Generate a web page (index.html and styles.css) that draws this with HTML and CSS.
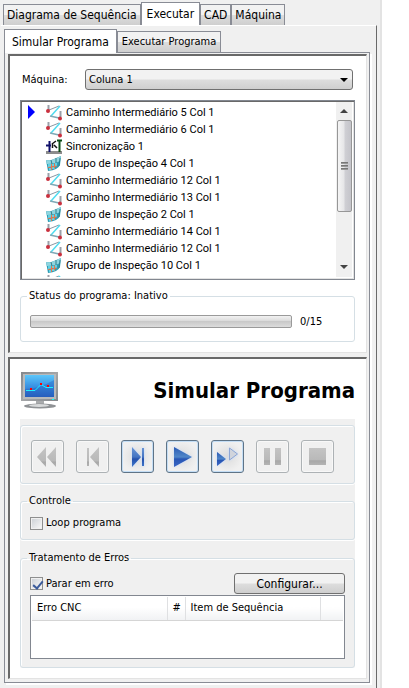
FILE: index.html
```html
<!DOCTYPE html>
<html lang="pt-BR">
<head>
<meta charset="utf-8">
<meta name="viewport" content="width=device-width, initial-scale=1">
<title>Simular Programa</title>
<link rel="stylesheet" href="styles.css">
</head>
<body>
<svg class="defs" width="0" height="0" aria-hidden="true">
  <defs>
    <linearGradient id="gBlue" x1="0" y1="0" x2="0" y2="1"><stop offset="0" stop-color="#6a96d6"/><stop offset=".5" stop-color="#4474c2"/><stop offset=".6" stop-color="#2450ac"/><stop offset="1" stop-color="#3f78cc"/></linearGradient>
    <linearGradient id="gPlay" x1="0" y1="0" x2="0" y2="1"><stop offset="0" stop-color="#2a5ab4"/><stop offset=".5" stop-color="#4f86c8"/><stop offset=".6" stop-color="#2856b4"/><stop offset="1" stop-color="#3a66c4"/></linearGradient>
    <linearGradient id="gGray" x1="0" y1="0" x2="0" y2="1"><stop offset="0" stop-color="#c4c4c4"/><stop offset=".7" stop-color="#b9b9b9"/><stop offset=".75" stop-color="#a8a8a8"/><stop offset="1" stop-color="#b4b4b4"/></linearGradient>
    <linearGradient id="gScreen" x1="0" y1="0" x2="0" y2="1"><stop offset="0" stop-color="#5cc6fa"/><stop offset=".5" stop-color="#3a94e4"/><stop offset="1" stop-color="#2a62c0"/></linearGradient>
    <linearGradient id="gFrame" x1="0" y1="0" x2="1" y2="1"><stop offset="0" stop-color="#84888c"/><stop offset=".5" stop-color="#a4a6a8"/><stop offset="1" stop-color="#84888c"/></linearGradient>
    <symbol id="path" viewBox="0 0 16 16">
      <path d="M2.500 0v5M14.500 6v6" stroke="#9aa0a9" stroke-width="2"/>
      <path d="M3 5l10-4" stroke="#8a97a3" stroke-width="1"/>
      <path d="M14 1L5 11" fill="none" stroke="#4fdcf0" stroke-width="1.500"/>
      <path d="M4 11l9 2" stroke="#7fa9b6" stroke-width="1.500"/>
      <circle cx="2" cy="6" r="2" fill="#c9303e"/><circle cx="14" cy="13.500" r="2" fill="#c9303e"/>
    </symbol>
    <symbol id="sync" viewBox="0 0 16 16">
      <path d="M0 12h16v3H0z" fill="#8c8c8c"/>
      <path d="M3.500 2v11M0 6.500h5" stroke="#10106a" stroke-width="2"/>
      <path d="M13.500 1v12M11 1.500h5" stroke="#0a4a14" stroke-width="2"/>
      <path d="M10 2L6 5M6.500 4v5M8 6l3 3" fill="none" stroke="#111" stroke-width="1.500"/>
    </symbol>
    <symbol id="group" viewBox="0 0 16 16">
      <path d="M0 4q4 1 8-1l7-3-1 9q-2 5-12 6z" fill="#2f9db4"/>
      <path d="M0 4q4 1 8-1l7-3-1 5Q9 8 1 8z" fill="#8fd5df"/>
      <path d="M5 4l1 4M10 2v5M14 2l-1 8" fill="none" stroke="#2f7f8e"/>
      <path d="M2 8h3v3H2zM6 8h2v2H6zM9 7h2v3H9zM3 12h2v2H3zM6 11h3v2H6z" fill="#5ed2e6"/>
      <path d="M2 11.500l9-1.500M5.500 8v6M8.500 7.500v5" fill="none" stroke="#e8764c"/>
    </symbol>
  </defs>
</svg>

<main class="app">
  <nav class="tabs tabs-main">
    <button class="tab" type="button">Diagrama de Sequência</button>
    <button class="tab active" type="button">Executar</button>
    <button class="tab" type="button">CAD</button>
    <button class="tab" type="button">Máquina</button>
  </nav>

  <div class="page">
    <nav class="tabs tabs-sub">
      <button class="tab active" type="button">Simular Programa</button>
      <button class="tab" type="button">Executar Programa</button>
    </nav>

    <div class="pane">
      <section class="panel">
        <div class="machine">
          <label for="machine">Máquina:</label>
          <div class="combo">
            <select id="machine"><option>Coluna 1</option></select>
            <svg class="combo-arrow" width="8" height="4" viewBox="0 0 8 4"><path d="M0 0h8L4 4z"/></svg>
          </div>
        </div>

        <div class="listbox">
          <ul class="items">
            <li class="current"><svg><use href="#path"/></svg>Caminho Intermediário 5 Col 1</li>
            <li><svg><use href="#path"/></svg>Caminho Intermediário 6 Col 1</li>
            <li><svg><use href="#sync"/></svg>Sincronização 1</li>
            <li><svg><use href="#group"/></svg>Grupo de Inspeção 4 Col 1</li>
            <li><svg><use href="#path"/></svg>Caminho Intermediário 12 Col 1</li>
            <li><svg><use href="#path"/></svg>Caminho Intermediário 13 Col 1</li>
            <li><svg><use href="#group"/></svg>Grupo de Inspeção 2 Col 1</li>
            <li><svg><use href="#path"/></svg>Caminho Intermediário 14 Col 1</li>
            <li><svg><use href="#path"/></svg>Caminho Intermediário 12 Col 1</li>
            <li><svg><use href="#group"/></svg>Grupo de Inspeção 10 Col 1</li>
            <li><svg><use href="#path"/></svg>Inspeção Ponto 16 Col 1</li>
          </ul>
          <div class="scroll">
            <svg width="8" height="4" viewBox="0 0 8 4"><path d="M0 4h8L4 0z" fill="#444"/></svg>
            <div class="thumb"><i></i><i></i><i></i></div>
            <svg class="down" width="8" height="4" viewBox="0 0 8 4"><path d="M0 0h8L4 4z" fill="#444"/></svg>
          </div>
        </div>

        <fieldset class="group status">
          <legend>Status do programa: Inativo</legend>
          <div class="bar" role="progressbar" aria-valuenow="0" aria-valuemax="15"></div>
          <span class="count">0/15</span>
        </fieldset>
      </section>

      <section class="panel lower">
        <header class="head">
          <svg width="38" height="38" viewBox="0 0 38 38">
            <path d="M15 28h8v6h-8z" fill="#a9abad"/>
            <ellipse cx="19" cy="34" rx="16" ry="2.500" fill="#8f9295"/><ellipse cx="18" cy="33.500" rx="10" ry="1.500" fill="#d8dadb"/>
            <path d="M0 0h37v29H0z" fill="url(#gFrame)"/><path d="M2 2h33v25H2z" fill="#b8babb"/>
            <path d="M4 3h29v22H4z" fill="url(#gScreen)"/><path d="M4 17Q18 17 33 8v17H4z" fill="#2157b8" opacity=".35"/>
            <path d="M5 18.500h9l6-6 5 3h7" fill="none" stroke="#1ef0ff"/>
            <path d="M9 16h2v2H9zM19 11h2v2h-2zM26 13h2v2h-2z" fill="#f00"/><path d="M31 27h2v1h-2z" fill="#0ff"/>
          </svg>
          <h1>Simular Programa</h1>
        </header>

        <div class="controls">
          <div class="group player">
            <button type="button" disabled aria-label="Retroceder"><svg viewBox="0 0 33 33"><path d="M15 7v20L6 17zM25 7v20L16 17z" fill="url(#gGray)"/></svg></button>
            <button type="button" disabled aria-label="Anterior"><svg viewBox="0 0 33 33"><path d="M11 8h2v18h-2zM23 7v20l-9-10z" fill="url(#gGray)"/></svg></button>
            <button type="button" aria-label="Próximo"><svg viewBox="0 0 33 33"><path d="M11 7v20l9-10zM21 8h2v18h-2z" fill="url(#gBlue)"/></svg></button>
            <button type="button" aria-label="Executar"><svg viewBox="0 0 33 33"><path d="M8 7v20l18-10z" fill="url(#gPlay)"/></svg></button>
            <button type="button" aria-label="Avançar"><svg viewBox="0 0 33 33"><path d="M6 12v14l9-7z" fill="url(#gPlay)"/><path d="M18.500 8v12l8-6z" fill="#d0d4dc" stroke="#8da6d4"/></svg></button>
            <button type="button" disabled aria-label="Pausar"><svg viewBox="0 0 33 33"><path d="M8 8h6v17H8zM19 8h6v17h-6z" fill="url(#gGray)"/></svg></button>
            <button type="button" disabled aria-label="Parar"><svg viewBox="0 0 33 33"><path d="M8 8h17v17H8z" fill="url(#gGray)"/></svg></button>
          </div>

          <fieldset class="group loop">
            <legend>Controle</legend>
            <label class="check"><input type="checkbox">Loop programa</label>
          </fieldset>

          <fieldset class="group errors">
            <legend>Tratamento de Erros</legend>
            <div class="error-row">
              <label class="check"><input type="checkbox" checked>Parar em erro</label>
              <button class="configure" type="button">Configurar...</button>
            </div>
            <div class="grid">
              <table>
                <thead><tr><th class="c-error">Erro CNC</th><th class="c-num">#</th><th class="c-item">Item de Sequência</th><th></th></tr></thead>
              </table>
            </div>
          </fieldset>
        </div>
      </section>
    </div>
  </div>
</main>
</body>
</html>
```
FILE: styles.css
```css
* { box-sizing: border-box; }

body {
  margin: 0;
  background: #fff;
  color: #000;
  font: 11px/16px "DejaVu Sans Condensed", "DejaVu Sans", sans-serif;
}

button, select, input { font: inherit; color: inherit; margin: 0; }
.defs { position: absolute; }

.app {
  display: flex;
  flex-direction: column;
  min-height: 100vh;
  margin-right: 27px;
  padding: 2px 3px 0 0;
  background: #f0f0f0;
  border-right: 2px solid #e3e3e3;
}

.tabs { display: flex; align-items: flex-end; }
.tab {
  height: 21px;
  padding: 0 3px;
  white-space: nowrap;
  border: 1px solid #898c95;
  border-bottom: 0;
  border-radius: 0;
  background: linear-gradient(#f2f2f2 0 48%, #dddddd 52%, #cfcfcf);
}
.tab.active { height: 23px; padding: 0 5px; background: #fff; }
.tabs-main { padding-left: 3px; font-size: 12px; }

.page {
  flex: 1;
  margin-left: 1px;
  padding: 3px 6px 4px 3px;
  border-top: 1px solid #fff;
  border-right: 1px solid #696969;
}
.tabs-sub .tab { padding: 0 4px; }
.tabs-sub .tab.active { position: relative; height: 24px; margin-bottom: -1px; padding: 0 7px; font-size: 12px; }

.pane {
  padding: 1px 2px 3px 3px;
  background: #f0f0f0;
  border: 1px solid #898c95;
  box-shadow: 2px 2px 0 #fff;
}

.panel {
  padding: 13px 11px 10px 10px;
  background: #fff;
  border: 1px solid #e3e3e3;
  border-top: 2px solid #696969;
  border-left: 2px solid #696969;
}
.lower { margin-top: 4px; }

.machine { display: flex; align-items: center; padding: 0 2px; margin-bottom: 10px; }
.machine label { flex: 0 0 63px; }
.combo { position: relative; flex: 1; }
.combo select {
  display: block;
  width: 100%;
  height: 21px;
  padding: 0 3px;
  appearance: none;
  border: 1px solid #707070;
  border-radius: 3px;
  background: linear-gradient(#f2f2f2 0 48%, #dddddd 52%, #cfcfcf);
}
.combo-arrow { position: absolute; right: 5px; top: 9px; pointer-events: none; }

.listbox {
  display: flex;
  height: 180px;
  padding: 0 2px 2px 0;
  overflow: hidden;
  border: 1px solid #828790;
  box-shadow: inset 1px 1px 0 #696969, inset -1px -1px 0 #e3e3e3;
}
.items {
  flex: 1;
  margin: 0;
  padding: 3px 0 0 25px;
  overflow: hidden;
  list-style: none;
  font: 11px/17px Roboto, "Liberation Sans", sans-serif;
}
.items li { position: relative; display: flex; align-items: center; gap: 4px; height: 17px; white-space: nowrap; }
.items svg { width: 16px; height: 16px; }
.items .current::before {
  content: "";
  position: absolute;
  left: -18px;
  top: 1px;
  border: solid transparent;
  border-width: 7px 0 7px 7px;
  border-left-color: #00f;
}

.scroll {
  display: flex;
  flex-direction: column;
  align-items: center;
  width: 16px;
  margin-top: 1px;
  padding: 7px 0 8px;
  background: #f0f0f0;
}
.thumb {
  display: flex;
  flex-direction: column;
  align-items: center;
  justify-content: center;
  gap: 1px;
  width: 15px;
  height: 92px;
  margin-top: 7px;
  border: 1px solid #979797;
  border-radius: 2px;
  background: linear-gradient(90deg, #f5f5f5, #e6e6e8 45%, #cfcfd4 55%, #c4c4ca);
}
.thumb i { width: 7px; height: 2px; background: linear-gradient(#666, #aaa); }
.down { margin-top: auto; }

.group {
  min-width: 0;
  margin: 0;
  padding: 0 9px;
  border: 1px solid #d5dfe5;
  border-radius: 3px;
}
legend { height: 16px; margin-left: -3px; padding: 0 2px; }

.status { display: flex; align-items: center; gap: 8px; height: 54px; margin-top: 8px; padding-bottom: 2px; }
.bar {
  flex: 1;
  height: 13px;
  border: 1px solid #9a9a9a;
  border-radius: 2px;
  background: linear-gradient(#f2f2f2, #dedede 40%, #c9c9c9 50%, #dcdcdc);
}
.count { width: 45px; }

.head { display: flex; align-items: flex-start; justify-content: space-between; height: 47px; padding-left: 1px; }
h1 { margin: 5px 0 0; font: bold 22px/28px "DejaVu Sans Condensed", "DejaVu Sans", sans-serif; }

.controls { padding-top: 6px; background: #f0f0f0; }
.controls .group { box-shadow: inset 1px 1px 0 #fff, 0 1px 0 #fff; }
.player { display: flex; gap: 12px; padding: 14px 10px 10px; }
.player button {
  width: 33px;
  height: 33px;
  padding: 0;
  border: 1px solid #5f7487;
  border-radius: 3px;
  background: radial-gradient(#dcdcdc, #f0f0f0 70%);
  box-shadow: inset 0 0 0 1px #c3ddf5;
}
.player button:disabled { border-color: #adb2b5; background: #f0f0f0; box-shadow: inset 0 0 0 1px #f8f8f8; }
.player svg { display: block; width: 33px; height: 33px; margin: -1px; }
.player button:enabled svg { filter: drop-shadow(0 0 1px #c4daff); }

.loop { margin-top: 9px; padding-bottom: 8px; }
.errors { margin-top: 10px; padding-bottom: 8px; }
.check { display: flex; align-items: center; gap: 3px; }
.check input {
  width: 13px;
  height: 13px;
  padding: 1px;
  appearance: none;
  border: 1px solid #8e8f8f;
  background: linear-gradient(135deg, #cfd3d8, #f6f6f6) content-box #f4f4f4;
}
.check input:checked::after {
  content: "";
  display: block;
  width: 4px;
  height: 8px;
  margin: 0 0 0 3px;
  border: solid #3b5b9b;
  border-width: 0 2px 2px 0;
  transform: rotate(40deg);
}
.loop .check { margin-top: 6px; }
.error-row { display: flex; align-items: center; justify-content: space-between; margin-top: 7px; }
.configure {
  width: 111px;
  height: 21px;
  padding: 0;
  font-size: 12px;
  border: 1px solid #707070;
  border-radius: 3px;
  background: linear-gradient(#f2f2f2 0 48%, #dddddd 52%, #cfcfcf);
}
.grid { height: 64px; margin-top: 1px; padding: 1px; background: #fff; border: 1px solid #828790; }
table { width: 100%; border-collapse: collapse; table-layout: fixed; }
th {
  height: 23px;
  padding: 0 0 0 5px;
  text-align: left;
  font-weight: normal;
  white-space: nowrap;
  border-right: 1px solid #dfe0e2;
  border-bottom: 1px solid #d5d5d5;
  background: linear-gradient(#fff 45%, #f1f2f4);
}
th:last-child { border-right: 0; }
.c-error { width: 135px; }
.c-num { width: 18px; }
.c-item { width: 135px; }
```
